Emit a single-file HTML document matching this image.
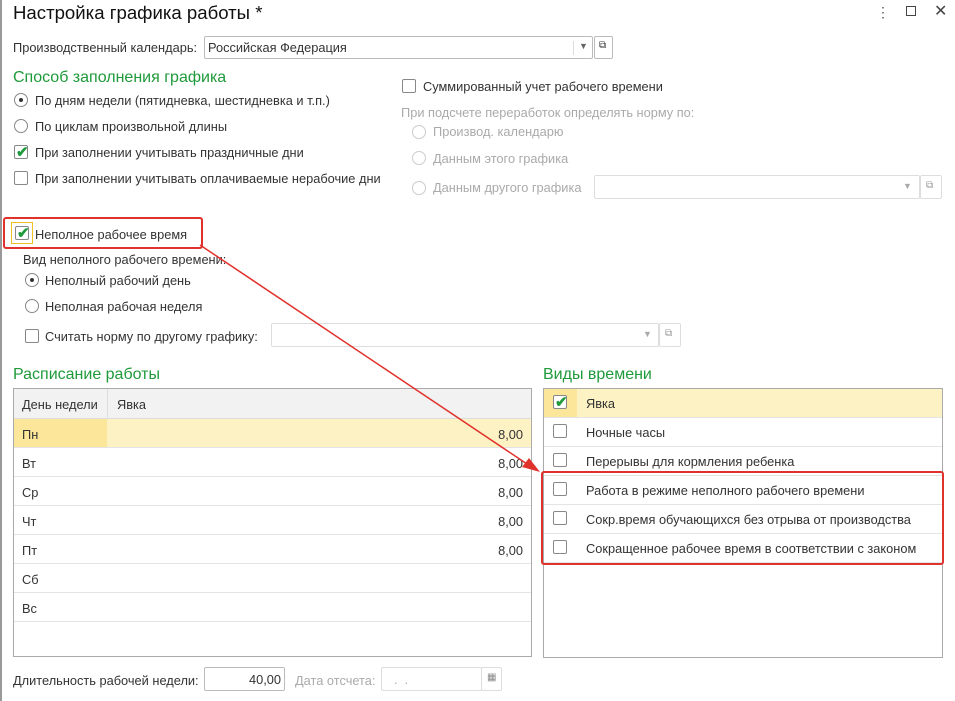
<!DOCTYPE html><html><head><meta charset="utf-8"><style>
*{box-sizing:border-box}
body{margin:0;width:955px;height:701px;background:#fff;font-family:"Liberation Sans",sans-serif;font-size:12.8px;color:#333;position:relative;overflow:hidden}
.a{position:absolute;white-space:nowrap}
.g{color:#1f9a3a;font-size:16px}
.cb{position:absolute;width:14px;height:14px;border:1px solid #888;border-radius:2px;background:#fff}
.rb{position:absolute;width:14px;height:14px;border:1px solid #888;border-radius:50%;background:#fff}
.dis{color:#aaa}.dis.rb{border-color:#ccc}
.fld{position:absolute;border:1px solid #bbb;border-radius:2px;background:#fff}
.tick{position:absolute;left:1px;top:-3px;color:#1f9a3a;font-size:15px;font-weight:bold}
.dot{position:absolute;left:4px;top:4px;width:4px;height:4px;border-radius:50%;background:#333}
.row{position:absolute;left:0;right:0;height:29px;border-bottom:1px solid #e4e4e4}
.red{position:absolute;border:2px solid #e0322c;border-radius:3px}
</style></head><body>
<div class="a" style="left:0;top:0;width:2px;height:701px;background:#999"></div>
<div class="a" style="left:13px;top:2px;font-size:18.6px;color:#111">Настройка графика работы *</div>
<div class="a" style="left:876px;top:4px;font-size:14px;color:#555">⋮</div>
<div class="a" style="left:906px;top:6px;width:10px;height:10px;border:1.5px solid #444"></div>
<div class="a" style="left:934px;top:1px;font-size:16px;color:#444">✕</div>

<div class="a" style="left:13px;top:40px">Производственный календарь:</div>
<div class="fld" style="left:204px;top:36px;width:389px;height:23px"><span class="a" style="left:3px;top:3px">Российская Федерация</span><span class="a" style="left:368px;top:4px;color:#666;font-size:9px;border-left:1px solid #ddd;padding-left:5px;height:14px">▼</span></div>
<div class="fld" style="left:594px;top:36px;width:19px;height:23px"><span class="a" style="left:4px;top:3px;font-size:10px">⧉</span></div>

<div class="a g" style="left:13px;top:69px">Способ заполнения графика</div>
<div class="rb" style="left:14px;top:93px"><div class="dot"></div></div><div class="a" style="left:35px;top:93px">По дням недели (пятидневка, шестидневка и т.п.)</div>
<div class="rb" style="left:14px;top:119px"></div><div class="a" style="left:35px;top:119px">По циклам произвольной длины</div>
<div class="cb" style="left:14px;top:145px"><span class="tick">✔</span></div><div class="a" style="left:35px;top:145px">При заполнении учитывать праздничные дни</div>
<div class="cb" style="left:14px;top:171px"></div><div class="a" style="left:35px;top:171px">При заполнении учитывать оплачиваемые нерабочие дни</div>

<div class="cb" style="left:402px;top:79px"></div><div class="a" style="left:423px;top:79px">Суммированный учет рабочего времени</div>
<div class="a dis" style="left:401px;top:105px">При подсчете переработок определять норму по:</div>
<div class="rb dis" style="left:412px;top:125px"></div><div class="a dis" style="left:433px;top:124px">Производ. календарю</div>
<div class="rb dis" style="left:412px;top:151px"></div><div class="a dis" style="left:433px;top:151px">Данным этого графика</div>
<div class="rb dis" style="left:412px;top:181px"></div><div class="a dis" style="left:433px;top:180px">Данным другого графика</div>
<div class="fld" style="left:594px;top:175px;width:326px;height:24px;border-color:#ddd"><span class="a" style="left:308px;top:5px;color:#aaa;font-size:9px">▼</span></div>
<div class="fld" style="left:920px;top:175px;width:22px;height:24px;border-color:#ddd"><span class="a" style="left:5px;top:4px;font-size:10px;color:#999">⧉</span></div>

<div class="red" style="left:3px;top:217px;width:200px;height:32px"></div>
<div class="a" style="left:11px;top:222px;width:22px;height:22px;border:1px solid #f0c020"></div>
<div class="cb" style="left:15px;top:226px"><span class="tick">✔</span></div><div class="a" style="left:35px;top:227px">Неполное рабочее время</div>
<div class="a" style="left:23px;top:252px">Вид неполного рабочего времени:</div>
<div class="rb" style="left:25px;top:273px"><div class="dot"></div></div><div class="a" style="left:45px;top:273px">Неполный рабочий день</div>
<div class="rb" style="left:25px;top:299px"></div><div class="a" style="left:45px;top:299px">Неполная рабочая неделя</div>
<div class="cb" style="left:25px;top:329px"></div><div class="a" style="left:45px;top:329px">Считать норму по другому графику:</div>
<div class="fld" style="left:271px;top:323px;width:388px;height:24px;border-color:#ddd"><span class="a" style="left:371px;top:5px;color:#aaa;font-size:9px">▼</span></div>
<div class="fld" style="left:659px;top:323px;width:22px;height:24px;border-color:#ddd"><span class="a" style="left:5px;top:4px;font-size:10px;color:#999">⧉</span></div>

<div class="a g" style="left:13px;top:366px">Расписание работы</div>
<div class="a" style="left:13px;top:388px;width:519px;height:269px;border:1px solid #aaa">
 <div class="row" style="top:0;height:30px;background:#f2f2f2;border-bottom:1px solid #ddd"><span class="a" style="left:8px;top:8px">День недели</span><span class="a" style="left:93px;top:0;height:30px;border-left:1px solid #ddd"></span><span class="a" style="left:103px;top:8px">Явка</span></div>
 <div class="row" style="top:30px;background:#fdf2c4"><span class="a" style="left:0;top:0;width:93px;height:28px;background:#fce69a"></span><span class="a" style="left:8px;top:8px">Пн</span><span class="a" style="right:8px;top:8px">8,00</span></div>
 <div class="row" style="top:59px"><span class="a" style="left:8px;top:8px">Вт</span><span class="a" style="right:8px;top:8px">8,00</span></div>
 <div class="row" style="top:88px"><span class="a" style="left:8px;top:8px">Ср</span><span class="a" style="right:8px;top:8px">8,00</span></div>
 <div class="row" style="top:117px"><span class="a" style="left:8px;top:8px">Чт</span><span class="a" style="right:8px;top:8px">8,00</span></div>
 <div class="row" style="top:146px"><span class="a" style="left:8px;top:8px">Пт</span><span class="a" style="right:8px;top:8px">8,00</span></div>
 <div class="row" style="top:175px"><span class="a" style="left:8px;top:8px">Сб</span></div>
 <div class="row" style="top:204px"><span class="a" style="left:8px;top:8px">Вс</span></div>
</div>

<div class="a g" style="left:543px;top:366px">Виды времени</div>
<div class="a" style="left:543px;top:388px;width:400px;height:270px;border:1px solid #aaa">
 <div class="row" style="top:0;background:#fdf2c4"><span class="a" style="left:0;top:0;width:33px;height:28px;background:#fce69a"></span><div class="cb" style="left:9px;top:6px"><span class="tick">✔</span></div><span class="a" style="left:42px;top:7px">Явка</span></div>
 <div class="row" style="top:29px"><div class="cb" style="left:9px;top:6px"></div><span class="a" style="left:42px;top:7px">Ночные часы</span></div>
 <div class="row" style="top:58px"><div class="cb" style="left:9px;top:6px"></div><span class="a" style="left:42px;top:7px">Перерывы для кормления ребенка</span></div>
 <div class="row" style="top:87px"><div class="cb" style="left:9px;top:6px"></div><span class="a" style="left:42px;top:7px">Работа в режиме неполного рабочего времени</span></div>
 <div class="row" style="top:116px"><div class="cb" style="left:9px;top:6px"></div><span class="a" style="left:42px;top:7px">Сокр.время обучающихся без отрыва от производства</span></div>
 <div class="row" style="top:145px"><div class="cb" style="left:9px;top:6px"></div><span class="a" style="left:42px;top:7px">Сокращенное рабочее время в соответствии с законом</span></div>
</div>
<div class="red" style="left:541px;top:471px;width:403px;height:94px"></div>

<svg class="a" style="left:0;top:0" width="955" height="701"><line x1="200" y1="245" x2="530" y2="466" stroke="#e0322c" stroke-width="1.5"/><polygon points="540,472 522,467 529,458" fill="#e0322c"/></svg>

<div class="a" style="left:13px;top:673px">Длительность рабочей недели:</div>
<div class="fld" style="left:204px;top:667px;width:81px;height:24px"><span class="a" style="right:3px;top:4px">40,00</span></div>
<div class="a dis" style="left:295px;top:673px">Дата отсчета:</div>
<div class="fld" style="left:381px;top:667px;width:101px;height:24px;border-color:#ddd"><span class="a dis" style="left:12px;top:4px">.&nbsp;&nbsp;.</span></div>
<div class="fld" style="left:481px;top:667px;width:21px;height:24px;border-color:#ddd"><span class="a" style="left:5px;top:4px;font-size:10px;color:#888">▦</span></div>
</body></html>
